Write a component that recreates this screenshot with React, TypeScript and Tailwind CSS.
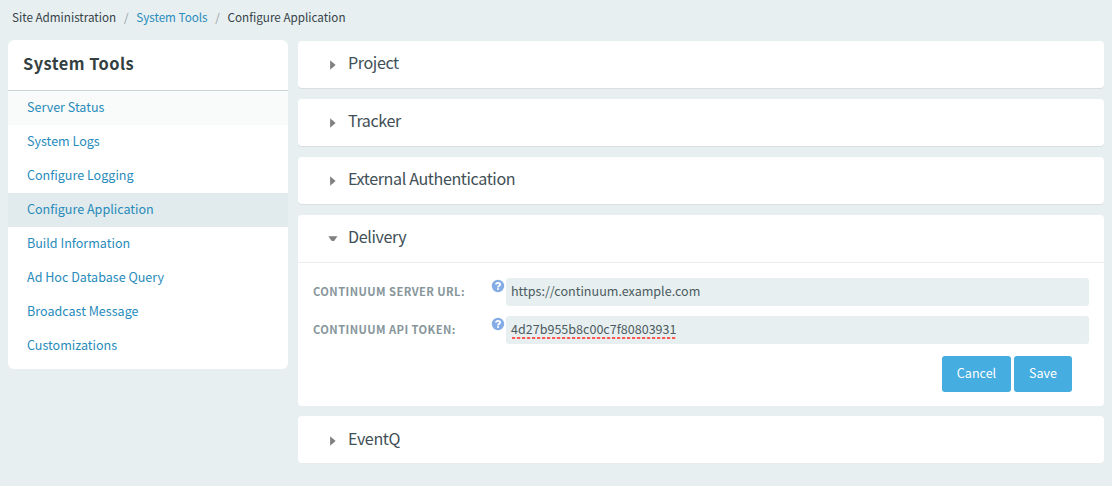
import type { ReactNode } from 'react';

const links = [
  'Server Status',
  'System Logs',
  'Configure Logging',
  'Configure Application',
  'Build Information',
  'Ad Hoc Database Query',
  'Broadcast Message',
  'Customizations',
];

function rowTone(label: string) {
  if (label === 'Configure Application') return 'bg-[#e1eaec]';
  if (label === 'Server Status') return 'bg-[#f9fbfa]';
  return '';
}

function PanelTitle({ title, open, last }: { title: string; open: boolean; last: boolean }) {
  return (
    <h2
      className={
        'flex h-[47px] items-center pl-[30px] text-[16.1px] leading-[24px] tracking-[-0.38px] text-[#414f56] ' +
        (last ? 'pt-[2px]' : '')
      }
    >
      <svg width="10" height="10" viewBox="0 0 10 10" className="mt-[1px] mr-[10px] shrink-0" fill="#808080">
        {open ? <path d="M0.3 2.3h9.2L6 7H3.8z" /> : <path d="M2.1 0.3 7.6 5 2.1 9.7z" />}
      </svg>
      <span className="-mt-[5px]">{title}</span>
    </h2>
  );
}

function Panel({ title, last = false, children }: { title: string; last?: boolean; children?: ReactNode }) {
  const open = Boolean(children);
  const edge = open ? '' : last ? 'shadow-[0_1px_0_#e9ecec]' : 'shadow-[0_1px_0_#d9dfe0]';
  return (
    <section className={'rounded-[4px] bg-white ' + edge}>
      <PanelTitle title={title} open={open} last={last} />
      {children}
    </section>
  );
}

function HelpIcon() {
  return (
    <svg width="14" height="14" viewBox="0 0 14 14" className="mt-[1px] mr-[1px] shrink-0">
      <circle cx="7" cy="7" r="6.2" fill="#84ade5" />
      <path d="M5 5.6C5 3.5 9.1 3.4 9.1 5.5C9.1 6.9 7.1 6.8 7.1 8.4" fill="none" stroke="#fff" strokeWidth="1.8" />
      <rect x="6.1" y="9.2" width="1.9" height="1.6" fill="#fff" />
    </svg>
  );
}

function Field({ label, children }: { label: string; children: ReactNode }) {
  return (
    <div className="flex h-[28px]">
      <label className="w-[178px] text-[11.2px] leading-[26px] font-bold tracking-[0.42px] whitespace-nowrap text-[#87969b]">
        {label}
      </label>
      <HelpIcon />
      <div className="flex-1 rounded-[3px] bg-[#e7eff1] pl-[5px] text-[12.55px] leading-[26px] text-[#4c5b60]">
        {children}
      </div>
    </div>
  );
}

export default function App() {
  return (
    <div className="h-[486px] w-[1112px] bg-[#e7eff1] font-['Noto_Sans_CJK_SC',sans-serif]">
      <nav className="flex h-[40px] pt-[7px] pl-[12px] text-[11.68px] leading-[20px] whitespace-nowrap text-[#364247]">
        <span>Site Administration</span>
        <span className="w-[20px] text-center text-[#98a0a3]">/</span>
        <a className="text-[#278bbb]">System Tools</a>
        <span className="w-[20px] text-center text-[#98a0a3]">/</span>
        <span>Configure Application</span>
      </nav>
      <div className="flex items-start gap-[10px] pr-[8px] pl-[8px]">
        <aside className="w-[280px] overflow-hidden rounded-[6px] bg-white pb-[6px]">
          <h1 className="h-[51px] border-b border-[#c8d6da] pl-[15px] text-[16.4px] leading-[47px] font-bold tracking-[0.45px] text-[#343f42]">
            System Tools
          </h1>
          <ul>
            {links.map((label) => (
              <li key={label} className={'h-[34px] pl-[19px] text-[12.55px] leading-[32px] text-[#278bbb] ' + rowTone(label)}>
                {label}
              </li>
            ))}
          </ul>
        </aside>
        <main className="mt-[1px] flex flex-1 flex-col gap-[11px]">
          <Panel title="Project" />
          <Panel title="Tracker" />
          <Panel title="External Authentication" />
          <div className="-mb-[1px]">
            <Panel title="Delivery">
              <div className="h-[144px] border-t border-[#ebeeef] px-[15px] pt-[15px]">
                <div className="flex flex-col gap-[10px]">
                  <Field label="CONTINUUM SERVER URL:">https://continuum.example.com</Field>
                  <Field label="CONTINUUM API TOKEN:">
                    <span className="block h-[21px]">4d27b955b8c00c7f80803931</span>
                    <svg width="164" height="2" className="ml-[1px]">
                      <path d="M0 1H164" stroke="#ff5a52" strokeWidth="2" strokeDasharray="3.2 1.8" />
                    </svg>
                  </Field>
                </div>
                <div className="mt-[12px] flex justify-end gap-[3px] pr-[17px] text-[12.55px] leading-[34px] text-white">
                  <button className="flex h-[36px] w-[69px] justify-center rounded-[3px] bg-[#45ade0]">Cancel</button>
                  <button className="flex h-[36px] w-[58px] justify-center rounded-[3px] bg-[#45ade0]">Save</button>
                </div>
              </div>
            </Panel>
          </div>
          <Panel title="EventQ" last />
        </main>
      </div>
    </div>
  );
}
